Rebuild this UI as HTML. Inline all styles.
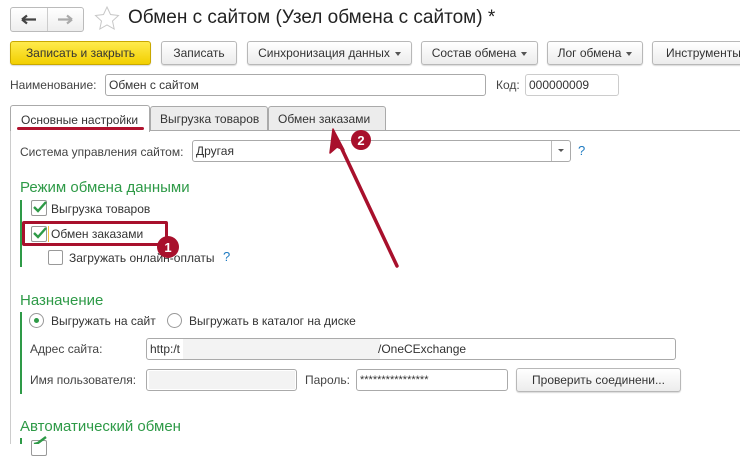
<!DOCTYPE html>
<html><head><meta charset="utf-8"><style>
*{box-sizing:border-box;margin:0;padding:0}
body{width:740px;height:444px;overflow:hidden;background:#fff;font-family:"Liberation Sans",Arial,sans-serif;font-size:12px;color:#333;position:relative}
.a{position:absolute;white-space:nowrap}
.btn{position:absolute;height:24px;border:1px solid #b8b8b8;border-radius:3px;background:linear-gradient(#fff,#ececec);text-align:center;line-height:22px;font-size:12px;color:#333;box-shadow:0 1px 1px rgba(0,0,0,.15)}
.inp{position:absolute;border:1px solid #aaa;border-radius:3px;background:#fff;height:22px;line-height:20px;padding-left:3px;font-size:12px;color:#333}
.g{color:#2e9a47;font-size:15px}
.cb{position:absolute;width:16px;height:16px;border:1px solid #999;border-radius:2px;background:#fff}
.tri{display:inline-block;border-left:3px solid transparent;border-right:3px solid transparent;border-top:4px solid #555;vertical-align:middle;margin-left:5px}
.vl{position:absolute;width:2px;background:#2e9a47}
</style></head><body>
<div class="a" style="left:10px;top:7px;width:74px;height:25px;border:1px solid #bbb;border-radius:3px;background:linear-gradient(#fff,#eee)"></div>
<div class="a" style="left:47px;top:8px;width:1px;height:23px;background:#ccc"></div>
<svg class="a" style="left:0;top:0" width="130" height="40">
<path d="M22 19.5h14M22 19.5l5-4M22 19.5l5 4" stroke="#444" stroke-width="2.2" fill="none"/>
<path d="M72 19.5h-14M72 19.5l-5-4M72 19.5l-5 4" stroke="#aaa" stroke-width="2.2" fill="none"/>
<path d="M107 7l3.5 7.5 8 1-6 5.5 1.7 8-7.2-4-7.2 4 1.7-8-6-5.5 8-1z" fill="none" stroke="#c8c8c8" stroke-width="1"/>
</svg>
<div class="a" style="left:128px;top:7px;font-size:19px;color:#222">Обмен с сайтом (Узел обмена с сайтом) *</div>

<div class="btn" style="left:10px;top:41px;width:141px;background:linear-gradient(#ffeb4d,#f2cf00);border-color:#c9a800">Записать и закрыть</div>
<div class="btn" style="left:161px;top:41px;width:76px">Записать</div>
<div class="btn" style="left:247px;top:41px;width:165px">Синхронизация данных<span class="tri"></span></div>
<div class="btn" style="left:421px;top:41px;width:117px">Состав обмена<span class="tri"></span></div>
<div class="btn" style="left:547px;top:41px;width:96px">Лог обмена<span class="tri"></span></div>
<div class="btn" style="left:652px;top:41px;width:100px;text-align:left;padding-left:13px">Инструменты</div>

<div class="a" style="left:10px;top:78px;color:#444">Наименование:</div>
<div class="inp" style="left:105px;top:74px;width:381px">Обмен с сайтом</div>
<div class="a" style="left:496px;top:78px;color:#444">Код:</div>
<div class="inp" style="left:525px;top:74px;width:94px;border-color:#ccc">000000009</div>

<div class="a" style="left:149px;top:130px;width:591px;height:1px;background:#aaa"></div>
<div class="a" style="left:10px;top:105px;width:140px;height:27px;border:1px solid #aaa;border-bottom:none;background:#fff;border-radius:3px 3px 0 0;padding:7px 0 0 10px">Основные настройки</div>
<div class="a" style="left:150px;top:106px;width:118px;height:25px;border:1px solid #aaa;background:#ececec;border-radius:3px 3px 0 0;padding:5px 0 0 9px">Выгрузка товаров</div>
<div class="a" style="left:268px;top:106px;width:118px;height:25px;border:1px solid #aaa;background:#ececec;border-radius:3px 3px 0 0;padding:5px 0 0 9px">Обмен заказами</div>
<div class="a" style="left:17px;top:127px;width:127px;height:3px;background:#b0122e;border-radius:2px"></div>
<div class="a" style="left:10px;top:131px;width:1px;height:313px;background:#ccc"></div>

<div class="a" style="left:20px;top:145px;color:#444">Система управления сайтом:</div>
<div class="inp" style="left:192px;top:140px;width:379px">Другая</div>
<div class="a" style="left:551px;top:141px;width:1px;height:20px;background:#bbb"></div>
<div class="a" style="left:558px;top:149px;border-left:3px solid transparent;border-right:3px solid transparent;border-top:3px solid #555"></div>
<div class="a" style="left:578px;top:143px;color:#1f7bc1;font-size:13px">?</div>

<div class="a g" style="left:20px;top:179px">Режим обмена данными</div>
<div class="vl" style="left:20px;top:200px;height:67px"></div>
<div class="cb" style="left:31px;top:200px"></div>
<div class="a" style="left:48px;top:226px;width:1px;height:16px;background:#f0c040"></div>
<div class="a" style="left:51px;top:202px">Выгрузка товаров</div>
<div class="cb" style="left:31px;top:226px"></div>
<div class="a" style="left:51px;top:227px">Обмен заказами</div>
<div class="a" style="left:22px;top:221px;width:146px;height:25px;border:3px solid #a8102c;border-radius:2px"></div>
<div class="cb" style="left:48px;top:250px;width:15px;height:15px"></div>
<div class="a" style="left:69px;top:251px">Загружать онлайн-оплаты</div>
<div class="a" style="left:223px;top:249px;color:#1f7bc1;font-size:13px">?</div>

<div class="a g" style="left:20px;top:292px">Назначение</div>
<div class="vl" style="left:20px;top:312px;height:82px"></div>
<div class="a" style="left:29px;top:313px;width:15px;height:15px;border:1px solid #999;border-radius:50%"></div>
<div class="a" style="left:34px;top:318px;width:5px;height:5px;background:#2e9a47;border-radius:50%"></div>
<div class="a" style="left:51px;top:314px">Выгружать на сайт</div>
<div class="a" style="left:167px;top:313px;width:15px;height:15px;border:1px solid #999;border-radius:50%"></div>
<div class="a" style="left:189px;top:314px">Выгружать в каталог на диске</div>

<div class="a" style="left:30px;top:342px;color:#444">Адрес сайта:</div>
<div class="inp" style="left:146px;top:338px;width:530px">http:/t</div>
<div class="a" style="left:183px;top:339px;width:197px;height:20px;background:#f3f3f3"></div>
<div class="a" style="left:378px;top:342px">/OneCExchange</div>
<div class="a" style="left:30px;top:373px;color:#444">Имя пользователя:</div>
<div class="inp" style="left:146px;top:369px;width:151px"></div>
<div class="a" style="left:149px;top:371px;width:146px;height:18px;background:#f3f3f3"></div>
<div class="a" style="left:305px;top:373px;color:#444">Пароль:</div>
<div class="inp" style="left:356px;top:369px;width:152px;font-size:11px">****************</div>
<div class="btn" style="left:516px;top:368px;width:165px">Проверить соединени...</div>

<div class="a g" style="left:20px;top:418px">Автоматический обмен</div>
<div class="vl" style="left:20px;top:438px;height:6px"></div>
<div class="cb" style="left:31px;top:440px"></div>

<svg class="a" style="left:0;top:0" width="740" height="444">
<path d="M34 207l4 4 8-9" stroke="#2e9a47" stroke-width="2.4" fill="none"/>
<path d="M34 233l4 4 8-9" stroke="#2e9a47" stroke-width="2.4" fill="none"/>
<path d="M34 444l4-1 8-6" stroke="#2e9a47" stroke-width="2.4" fill="none"/>
<path d="M397 266 L341 147" stroke="#a8102c" stroke-width="3.5" stroke-linecap="round"/>
<path d="M333 129 L330 153 L337 147 L344 150 Z" fill="#a8102c" stroke="#a8102c" stroke-width="1.5" stroke-linejoin="round"/>
<circle cx="361" cy="140" r="10" fill="#a8102c"/>
<text x="361" y="145" fill="#fff" font-size="13" font-weight="bold" text-anchor="middle" font-family="Liberation Sans">2</text>
<circle cx="168" cy="247" r="11" fill="#a8102c"/>
<text x="168" y="252" fill="#fff" font-size="13" font-weight="bold" text-anchor="middle" font-family="Liberation Sans">1</text>
</svg>
</body></html>
